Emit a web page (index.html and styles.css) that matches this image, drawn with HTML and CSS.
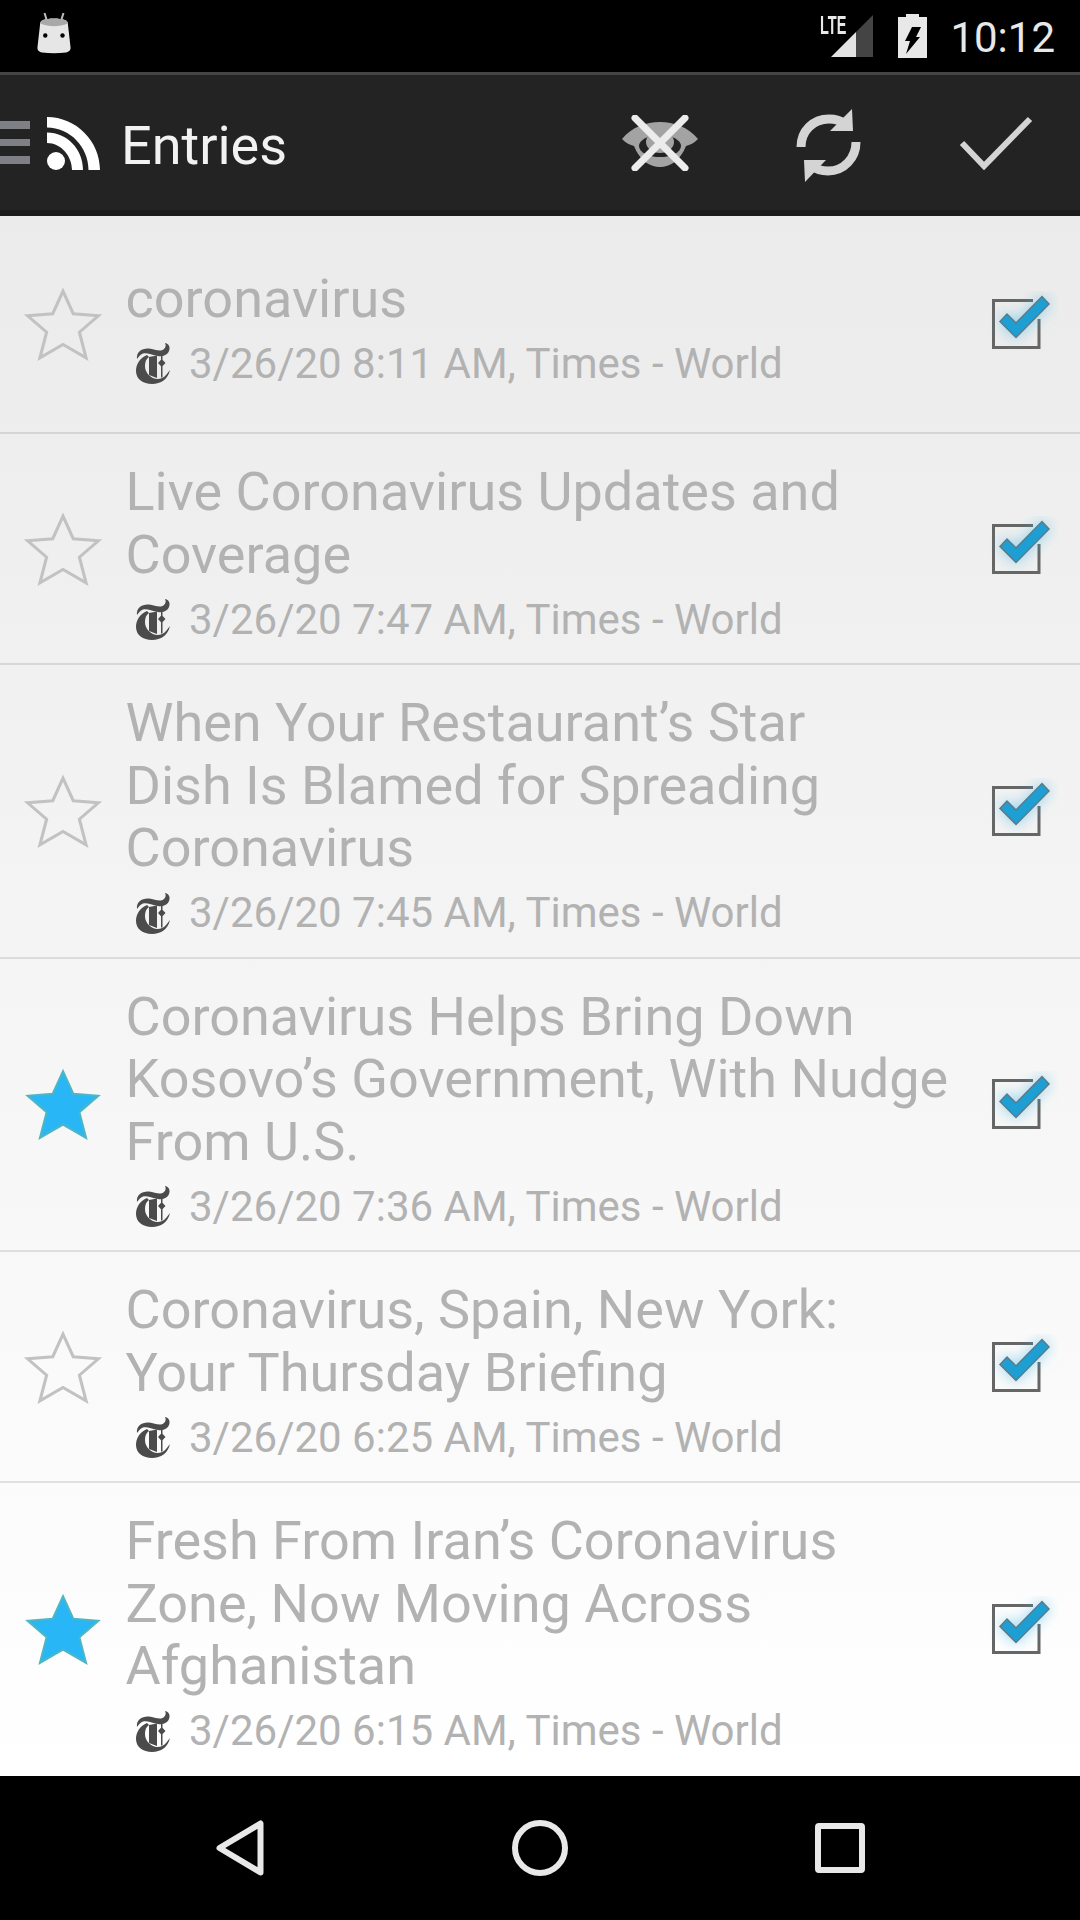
FILE: index.html
```html
<!DOCTYPE html>
<html lang="en">
<head>
<meta charset="utf-8">
<title>Entries</title>
<link rel="stylesheet" href="styles.css">
</head>
<body>
<svg class="defs" width="0" height="0" aria-hidden="true">
  <defs>
    <symbol id="star" viewBox="0 0 80 80">
      <path d="M40 8L50 30L74.500 32L56 48L62.500 73L40 60L17.500 73L24 48L5.500 32L30 30Z"/>
    </symbol>
    <symbol id="nyt" viewBox="0 0 34 42">
      <path class="nyt-solid" d="M1 17C0 10 6 6 13 6.500C19 7 24 10.500 28 7C30 5 30 3 29 1C32 1.500 34 4 33.500 7C33 12 28 15 22 14C16 13 11 10.500 7 11.500C4 12.500 3 14.500 1 17Z"/>
      <path class="nyt-solid" d="M11 13C4 16 0 22 0 29C0 37 7 42 16 42C25 42 32 37 34 28L30 33C27 37 21 38 17 36C12 33.500 9 29 9 24C9 20 10 17 13 15Z"/>
      <path class="nyt-solid" d="M13 15L21 13.500V36L13 33Z"/>
      <path class="nyt-solid" d="M25 13.500H26.500V35.500H25ZM25.700 17L29.500 21L25.700 25L22 21Z"/>
    </symbol>
    <symbol id="checkmark" viewBox="0 0 70 60">
      <path class="check-box" d="M44 9.500H4.500V56.500H50V28"/>
      <path class="check-tick" d="M11 30.500L18 23L27 32L53 5.500L60 13L27 46.500Z"/>
    </symbol>
  </defs>
</svg>

<header class="status-bar">
  <svg class="android-icon" viewBox="0 0 34 42" width="34" height="42">
    <path class="android-antenna" d="M7.500 1L10 9M26.500 1L24 9"/>
    <path class="android-head" d="M6 8C12 6 22 6 28 8C30 9 31 10 31 13L33.500 35C34 38 32 40 29 40.500C21 41.500 13 41.500 5 40.500C2 40 0 38 .5 35L3 13C3 10 4 9 6 8Z"/>
    <path class="android-cap" d="M6 8C12 6 22 6 28 8C30 9 31 10 30.500 11.500C22 15 12 15 3.500 11.500C3 10 4 9 6 8Z"/>
    <circle class="android-eye" cx="8.300" cy="23.500" r="2.200"/>
    <circle class="android-eye" cx="25.500" cy="23.500" r="2.200"/>
  </svg>
  <div class="status-right">
    <div class="signal">
      <span class="lte">LTE</span>
      <svg viewBox="0 0 42 42" width="42" height="42">
        <path class="signal-on" d="M0 42L25 17V42Z"/>
        <path class="signal-off" d="M25 17L42 0V42H25Z"/>
      </svg>
    </div>
    <svg class="battery" viewBox="0 0 29 44" width="29" height="44">
      <path class="battery-body" d="M8 0H21V3H29V44H0V3H8Z"/>
      <path class="battery-bolt" d="M14 13H23L18 23H22L8 40L12 27H7Z"/>
    </svg>
    <span class="clock">10:12</span>
  </div>
</header>

<nav class="toolbar">
  <div class="toolbar-title">
    <svg class="menu-icon" viewBox="0 0 30 43" width="30" height="43">
      <path d="M0 0H30V8H0ZM0 18H30V25H0ZM0 35H30V43H0Z"/>
    </svg>
    <svg class="rss-icon" viewBox="0 0 53 53" width="53" height="53">
      <circle cx="9" cy="44" r="9"/>
      <path d="M0 15.500C20 15.500 36 32 36 53H25C25 39 14 26 0 26Z"/>
      <path d="M0 0C29 0 53 24 53 53H41.500C41.500 30 23 10.500 0 10.500Z"/>
    </svg>
    <h1 class="title">Entries</h1>
  </div>
  <div class="actions">
    <div class="action">
      <svg viewBox="0 0 80 56" width="80" height="56">
        <path class="eye-shape" d="M2 24C12 12 26 7 40 7C54 7 68 12 78 24C74 28 70 30 66 31C60 46 50 52 40 52C30 52 20 46 14 31C10 30 6 28 2 24Z"/>
        <ellipse class="eye-hollow" cx="40" cy="31" rx="21" ry="11"/>
        <ellipse class="eye-shape" cx="40" cy="27" rx="14" ry="11"/>
        <path class="eye-cross" d="M15 3L65 53M65 3L15 53"/>
      </svg>
    </div>
    <div class="action">
      <svg class="sync-icon" viewBox="790 104 75 82" width="75" height="82">
        <path class="sync-arc" d="M801 147C801 131 813 119 829 119C835 119 840 120 845 124"/>
        <path class="sync-arrow" d="M852 109L853 131L830 131Z"/>
        <path class="sync-arc" d="M856 142C856 158 844 171 828 171C822 171 817 170 812 166"/>
        <path class="sync-arrow" d="M805 182L804 160L826 160Z"/>
      </svg>
    </div>
    <div class="action">
      <svg viewBox="0 0 74 54" width="74" height="54">
        <path class="done-tick" d="M3 27L25 50L71 3"/>
      </svg>
    </div>
  </div>
</nav>

<main class="list">
  <article class="row">
    <div class="star-cell"><svg class="star"><use href="#star"/></svg></div>
    <div class="entry">
      <div class="entry-title">coronavirus</div>
      <div class="meta"><svg class="nyt"><use href="#nyt"/></svg><span>3/26/20 8:11 AM, Times - World</span></div>
    </div>
    <svg class="check"><use href="#checkmark"/></svg>
  </article>
  <article class="row">
    <div class="star-cell"><svg class="star"><use href="#star"/></svg></div>
    <div class="entry">
      <div class="entry-title">Live Coronavirus Updates and<br>Coverage</div>
      <div class="meta"><svg class="nyt"><use href="#nyt"/></svg><span>3/26/20 7:47 AM, Times - World</span></div>
    </div>
    <svg class="check"><use href="#checkmark"/></svg>
  </article>
  <article class="row">
    <div class="star-cell"><svg class="star"><use href="#star"/></svg></div>
    <div class="entry">
      <div class="entry-title">When Your Restaurant’s Star<br>Dish Is Blamed for Spreading<br>Coronavirus</div>
      <div class="meta"><svg class="nyt"><use href="#nyt"/></svg><span>3/26/20 7:45 AM, Times - World</span></div>
    </div>
    <svg class="check"><use href="#checkmark"/></svg>
  </article>
  <article class="row">
    <div class="star-cell"><svg class="star star-on"><use href="#star"/></svg></div>
    <div class="entry">
      <div class="entry-title">Coronavirus Helps Bring Down<br>Kosovo’s Government, With Nudge<br>From U.S.</div>
      <div class="meta"><svg class="nyt"><use href="#nyt"/></svg><span>3/26/20 7:36 AM, Times - World</span></div>
    </div>
    <svg class="check"><use href="#checkmark"/></svg>
  </article>
  <article class="row">
    <div class="star-cell"><svg class="star"><use href="#star"/></svg></div>
    <div class="entry">
      <div class="entry-title">Coronavirus, Spain, New York:<br>Your Thursday Briefing</div>
      <div class="meta"><svg class="nyt"><use href="#nyt"/></svg><span>3/26/20 6:25 AM, Times - World</span></div>
    </div>
    <svg class="check"><use href="#checkmark"/></svg>
  </article>
  <article class="row">
    <div class="star-cell"><svg class="star star-on"><use href="#star"/></svg></div>
    <div class="entry">
      <div class="entry-title">Fresh From Iran’s Coronavirus<br>Zone, Now Moving Across<br>Afghanistan</div>
      <div class="meta"><svg class="nyt"><use href="#nyt"/></svg><span>3/26/20 6:15 AM, Times - World</span></div>
    </div>
    <svg class="check"><use href="#checkmark"/></svg>
  </article>
</main>

<footer class="nav-bar">
  <svg viewBox="0 0 48 56" width="48" height="56">
    <path class="nav-stroke" d="M44.500 3.500V52.500L3.500 28Z"/>
  </svg>
  <svg viewBox="0 0 56 56" width="56" height="56">
    <circle class="nav-stroke" cx="28" cy="28" r="25"/>
  </svg>
  <svg viewBox="0 0 50 50" width="50" height="50">
    <rect class="nav-stroke" x="3" y="3" width="44" height="44" rx="1"/>
  </svg>
</footer>
</body>
</html>
```

FILE: styles.css
```css
* { box-sizing: border-box; }

html, body { margin: 0; padding: 0; }

body {
  width: 1080px;
  height: 1920px;
  display: flex;
  flex-direction: column;
  overflow: hidden;
  background: #000;
  font-family: Roboto, "Noto Sans", sans-serif;
}

.defs { position: absolute; }

/* status bar */
.status-bar {
  flex: 0 0 72px;
  display: flex;
  justify-content: space-between;
  background: #000;
  padding: 12px 25px 0 37px;
}
.android-icon { display: block; }
.android-antenna { fill: none; stroke: #bdbdbd; stroke-width: 2; }
.android-head { fill: #e6e6e6; }
.android-cap { fill: #a8a8a8; }
.android-eye { fill: #000; }

.status-right { display: flex; align-items: flex-start; }
.signal { position: relative; display: flex; margin: 3px 25px 0 0; padding-left: 11px; }
.lte {
  position: absolute;
  left: 0;
  top: -2px;
  font: 700 25px/24px "Liberation Sans", sans-serif;
  color: #e8e8e8;
  transform: scaleX(.58);
  transform-origin: left top;
}
.signal-on { fill: #e2e2e2; }
.signal-off { fill: #444; }
.battery { margin: 2px 23px 0 0; }
.battery-body { fill: #e8e8e8; }
.battery-bolt { fill: #000; }
.clock { font-size: 42px; line-height: 56px; color: #e8e8e8; margin-top: -2px; }

/* toolbar */
.toolbar {
  flex: 0 0 144px;
  display: flex;
  justify-content: space-between;
  background: #232323;
  border-top: 3px solid #454545;
  border-bottom: 6px solid #1b1b1b;
}
.toolbar-title { display: flex; align-items: center; }
.menu-icon { fill: #7f8085; }
.rss-icon { fill: #fff; margin: 2px 0 0 17px; }
.title {
  margin: 5px 0 0 21px;
  font-size: 54px;
  font-weight: 400;
  color: #f2f2f2;
}
.actions { display: flex; }
.action { width: 168px; display: flex; align-items: center; justify-content: center; }
.sync-icon { margin: 4px 2px 0 0; }
.eye-shape { fill: #a3a3a3; }
.eye-hollow { fill: #232323; }
.eye-cross { fill: none; stroke: #ececec; stroke-width: 7; stroke-linecap: round; }
.sync-arc { fill: none; stroke: #d4d4d4; stroke-width: 9; }
.sync-arrow { fill: #d4d4d4; }
.done-tick { fill: none; stroke: #d4d4d4; stroke-width: 6; }

/* entry list */
.list {
  flex: 1;
  display: flex;
  flex-direction: column;
  background: linear-gradient(#ebebeb, #fff);
}
.row {
  flex: none;
  min-height: 218px;
  display: flex;
  align-items: center;
  border-bottom: 2px solid rgba(0, 0, 0, .1);
}
.row:last-child { border-bottom: 0; }
.star-cell { flex: 0 0 125.500px; padding-left: 22px; display: flex; }
.star {
  width: 82px;
  height: 82px;
  fill: none;
  stroke: #c2c2c2;
  stroke-width: 3;
}
.star-on { fill: #29b6f6; stroke: #4db6c4; stroke-width: 2; }
.entry { flex: 1; min-width: 0; padding: 27px 0 14px; }
.entry-title {
  font-size: 54px;
  line-height: 62.500px;
  color: #b2b2b2;
}
.meta {
  display: flex;
  align-items: center;
  height: 60px;
  margin-top: 3px;
  padding-left: 10.500px;
  font-size: 42px;
  color: #b2b2b2;
}
.nyt { width: 34px; height: 42px; margin-right: 19px; flex: none; }
.nyt-solid { fill: #4b4b4b; }
.check {
  flex: none;
  width: 70px;
  height: 60px;
  margin: 0 21px 6px 0;
  overflow: visible;
}
.check-box { fill: none; stroke: #666; stroke-width: 3; }
.check-tick {
  fill: #1e9fd3;
  stroke: #5d7a88;
  stroke-width: 1.500;
  filter: drop-shadow(0 0 7px rgba(60, 180, 230, .55));
}

/* navigation bar */
.nav-bar {
  flex: 0 0 144px;
  display: grid;
  grid-template-columns: repeat(3, 300px);
  justify-content: center;
  justify-items: center;
  align-items: center;
  background: #000;
}
.nav-stroke {
  fill: none;
  stroke: #e8e8e8;
  stroke-width: 6;
  stroke-linejoin: round;
}
```
